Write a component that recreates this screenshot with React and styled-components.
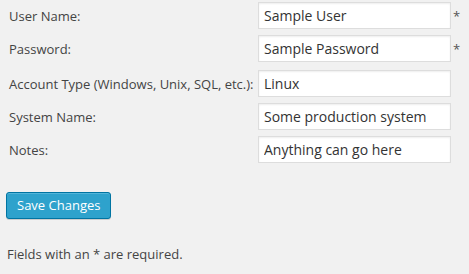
import React from "react";
import styled, { createGlobalStyle } from "styled-components";

const Global = createGlobalStyle`
  html, body { margin: 0; padding: 0; background: #f1f1f1; }
  body { font-family: "Open Sans", "Noto Sans", sans-serif; font-size: 13px; color: #444; }
`;

const Page = styled.form`
  padding: 2px 0 0 0;
`;

const FieldGrid = styled.div`
  display: grid;
  grid-template-columns: 249px 193px auto;
  column-gap: 0;
  padding-left: 9px;
`;

const Label = styled.label`
  display: flex;
  align-items: center;
  height: 27px;
  margin-top: ${(p) => p.$top || 0}px;
  font-size: 13px;
  line-height: 18px;
  color: #444;
  white-space: nowrap;
`;

const Input = styled.input`
  box-sizing: border-box;
  width: 193px;
  height: 27px;
  margin: ${(p) => p.$top || 0}px 0 0 0;
  padding: 0 5px;
  border: 1px solid #ddd;
  background: #fff;
  box-shadow: inset 0 1px 2px rgba(0, 0, 0, 0.07);
  font-family: "Open Sans", "Noto Sans", sans-serif;
  font-size: 14px;
  color: #333;
  outline: none;
`;

const Required = styled.span`
  display: flex;
  align-items: center;
  height: 27px;
  margin-top: ${(p) => p.$top || 0}px;
  padding-left: 2px;
  font-size: 13px;
  color: #555;
`;

const ButtonRow = styled.div`
  padding: 29px 0 0 6px;
`;

const Button = styled.button`
  box-sizing: border-box;
  height: 27px;
  padding: 0 10px;
  border: 1px solid #0074a2;
  border-radius: 3px;
  background: #2ea2cc;
  box-shadow: inset 0 1px 0 rgba(120, 200, 230, 0.5), 0 1px 0 rgba(0, 0, 0, 0.15);
  color: #fff;
  font-family: "Open Sans", "Noto Sans", sans-serif;
  font-size: 13px;
  line-height: 25px;
  cursor: pointer;
`;

const Note = styled.p`
  margin: 0;
  padding: 26px 0 0 7px;
  font-size: 13px;
  line-height: 18px;
  color: #444;
`;

const fields = [
  { label: "User Name:", value: "Sample User", req: true, top: 0 },
  { label: "Password:", value: "Sample Password", req: true, top: 6 },
  { label: "Account Type (Windows, Unix, SQL, etc.):", value: "Linux", req: false, top: 8 },
  { label: "System Name:", value: "Some production system", req: false, top: 6 },
  { label: "Notes:", value: "Anything can go here", req: false, top: 6 },
];

export default function App() {
  return (
    <>
      <Global />
      <Page onSubmit={(e) => e.preventDefault()}>
        <FieldGrid>
          {fields.map((f) => (
            <React.Fragment key={f.label}>
              <Label $top={f.top}>{f.label}</Label>
              <Input $top={f.top} defaultValue={f.value} />
              <Required $top={f.top}>{f.req ? "*" : ""}</Required>
            </React.Fragment>
          ))}
        </FieldGrid>
        <ButtonRow>
          <Button type="submit">Save Changes</Button>
        </ButtonRow>
        <Note>Fields with an * are required.</Note>
      </Page>
    </>
  );
}
